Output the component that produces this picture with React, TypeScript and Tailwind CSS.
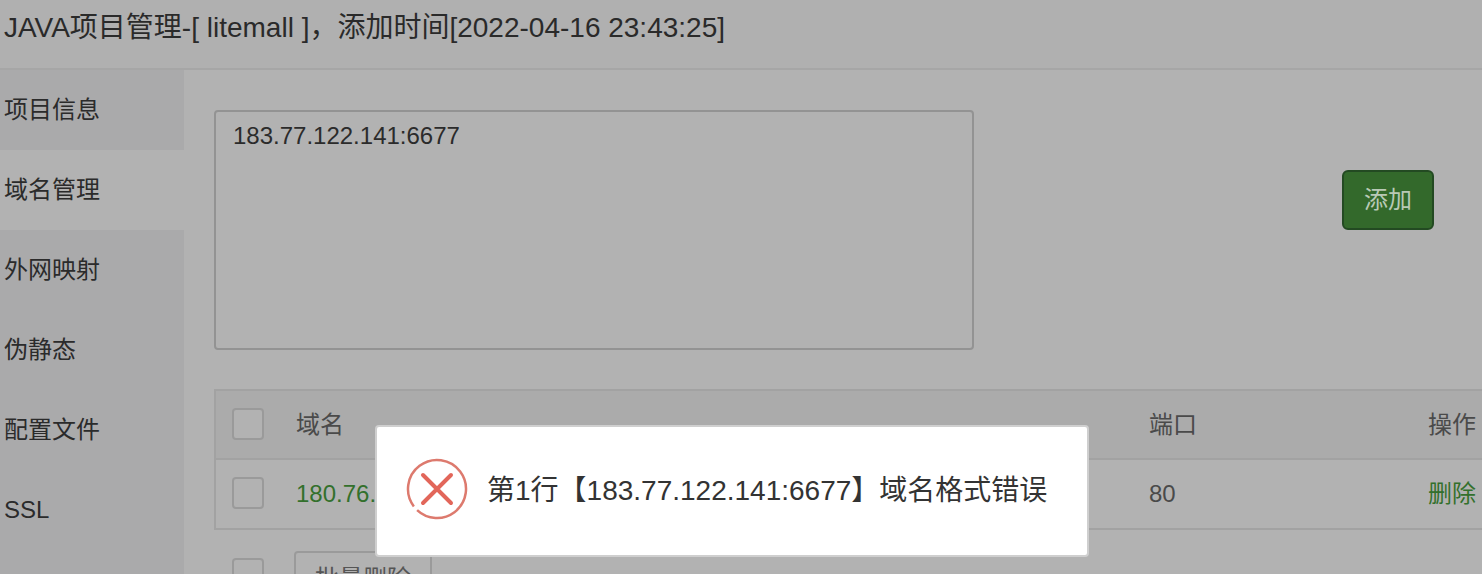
import * as React from "react"

const FONT = "font-['Liberation_Sans','Noto_Sans_CJK_SC',sans-serif]"

const NAV_ITEMS: string[] = ["项目信息", "域名管理", "外网映射", "伪静态", "配置文件", "SSL"]

function Checkbox({ className = "" }: { className?: string }): React.JSX.Element {
  return <span className={`block size-8 shrink-0 rounded-[4px] border-2 border-[#9a9a9a] bg-[#b2b2b2] ${className}`} />
}

// Round red error icon from the toast, the ring has a small gap at the lower left
function ErrorIcon(): React.JSX.Element {
  return (
    <svg width="62" height="62" viewBox="0 0 62 62" fill="none" className="mb-1 shrink-0">
      <circle
        cx="31"
        cy="31"
        r="29"
        stroke="#dd7a6e"
        strokeWidth="2.5"
        strokeDasharray="177 5.2"
        transform="rotate(143 31 31)"
      />
      <path d="M17 17L45 45M45 17L17 45" stroke="#e2665a" strokeWidth="4" strokeLinecap="round" />
    </svg>
  )
}

export default function App(): React.JSX.Element {
  return (
    <div className={`${FONT} relative h-[574px] w-[1482px] overflow-hidden bg-[#b2b2b2] text-[24px] text-[#333]`}>
      <header className="h-[70px] border-b-2 border-[#a6a6a6] bg-[#b0b0b0] pl-1 pt-[9px] text-[28px] leading-[38px] text-[#2a2a2a]">
        JAVA项目管理-[ litemall ]，添加时间[2022-04-16 23:43:25]
      </header>

      <div className="flex">
        {/* Side nav */}
        <nav className="h-[504px] w-[184px] shrink-0 bg-[#aaaaab]">
          {NAV_ITEMS.map((item: string, i: number): React.JSX.Element => (
            <div
              key={item}
              className={`flex h-20 items-center pl-1 text-[#2b2b2b] ${i === 1 ? "bg-[#b2b2b2]" : ""}`}
            >
              {item}
            </div>
          ))}
        </nav>

        {/* Domain panel */}
        <main className="min-w-0 flex-1 pl-[30px] pt-10">
          <div className="flex items-start">
            <div className="h-[240px] w-[760px] rounded-[4px] border-2 border-[#939393] px-[17px] py-2 leading-[32px] text-[#2b2b2b]">
              183.77.122.141:6677
            </div>
            <button
              type="button"
              className="ml-[368px] mt-[60px] h-[60px] w-[92px] rounded-[6px] border-2 border-[#234a22] bg-[#33692b] text-[#b9c9b6]"
            >
              添加
            </button>
          </div>

          <div className="mt-[39px] w-[1300px] border-2 border-[#a2a2a2] text-[#4a4a4a]">
            <div className="flex h-[69px] items-center border-b-2 border-[#a2a2a2] bg-[#ababab] pl-4">
              <Checkbox className="-mt-[2px]" />
              <span className="ml-8 w-[853px]">域名</span>
              <span className="w-[279px]">端口</span>
              <span>操作</span>
            </div>
            <div className="flex h-[68px] items-center pl-4">
              <Checkbox className="-mt-[2px]" />
              <span className="ml-8 w-[853px] text-[#33702c]">180.76.</span>
              <span className="w-[279px]">80</span>
              <span className="text-[#33702c]">删除</span>
            </div>
          </div>

          <div className="mt-7 flex items-start pl-[18px]">
            <Checkbox />
            <button
              type="button"
              className="-mt-[7px] ml-[30px] h-14 w-[138px] rounded-[4px] border-2 border-[#9a9a9a] text-[#555]"
            >
              批量删除
            </button>
          </div>
        </main>
      </div>

      {/* Error toast */}
      <div className="absolute left-[375px] top-[425px] flex h-[132px] w-[714px] items-center rounded-[4px] border-2 border-[#cfcfcf] bg-white pl-[29px]">
        <ErrorIcon />
        <span className="ml-[19px] whitespace-nowrap text-[28px] text-[#333]">第1行【183.77.122.141:6677】域名格式错误</span>
      </div>
    </div>
  )
}
